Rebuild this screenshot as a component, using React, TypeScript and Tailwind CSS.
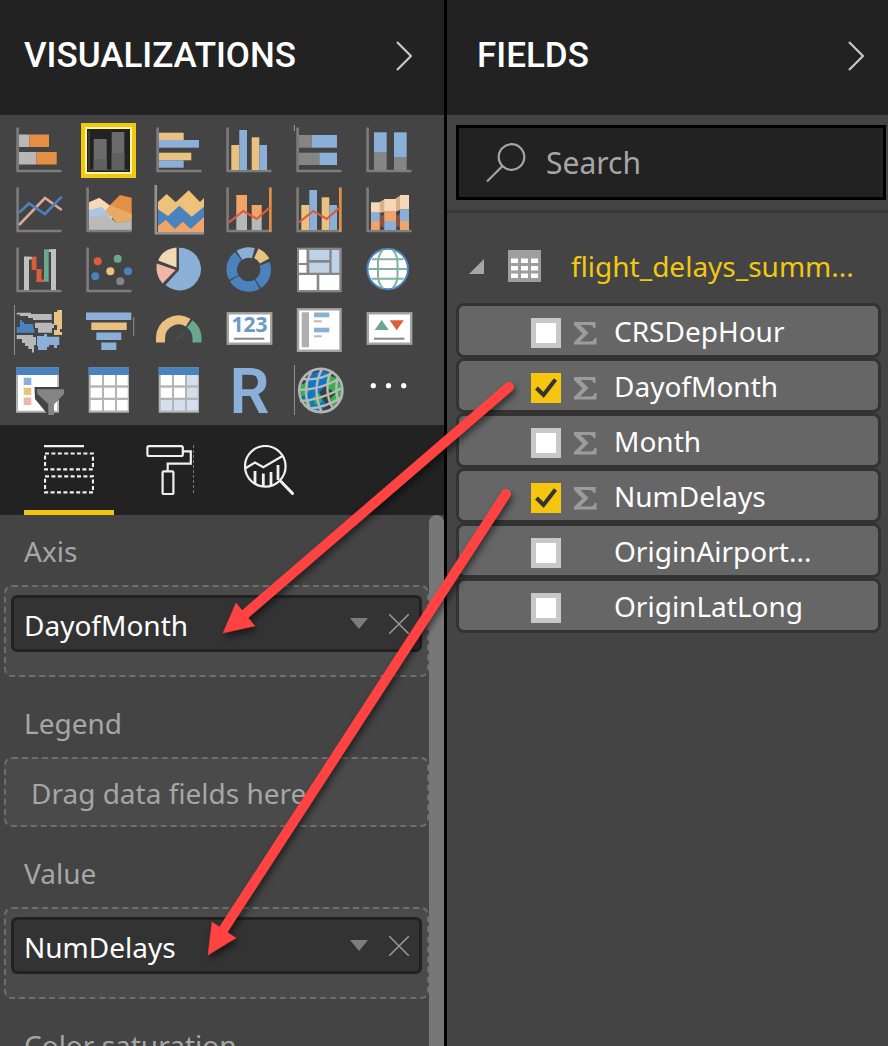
import { useState, type ReactNode } from "react";

const GRAY = "#7d7d7d";
const SILVER = "#b8b8b8";
const TAN = "#e9c282";
const SKY = "#8bafd6";
const BLUE = "#4a82bd";
const ORANGE = "#e58f45";
const SALMON = "#f0a468";
const RED = "#dc5c3c";
const GREEN = "#6aa791";
const PEACH = "#f6d7b8";
const PINK = "#efb5a8";

type Box = [number, number, number, number, string];

/** Filled boxes given as left, top, right, bottom, colour. */
function Boxes({ items }: { items: Box[] }) {
  return (
    <>
      {items.map(([l, t, r, b, fill], i) => (
        <rect key={i} x={l} y={t} width={r - l} height={b - t} fill={fill} />
      ))}
    </>
  );
}

function Axes() {
  return <path d="M6.6 4.5V48H50.5" fill="none" stroke={GRAY} strokeWidth="2.6" />;
}

function TableGlyph({ shaded }: { shaded?: boolean }) {
  const xs = [[9.7, 21], [23, 34], [36, 46.7]];
  const ys = [[12, 22.3], [24.7, 34.7], [37, 47.5]];
  return (
    <>
      <Boxes items={[[7.7, 4.3, 48, 49.7, "#b4b4b4"], [7.7, 4.3, 48, 12, BLUE]]} />
      {ys.map(([t, b], r) =>
        xs.map(([l, right], c) => (
          <rect
            key={`${r}-${c}`}
            x={l}
            y={t}
            width={right - l}
            height={b - t}
            fill={shaded && (r === 2 || c === 2) ? "#d3dfee" : "#fff"}
          />
        )),
      )}
    </>
  );
}

function Arc({ from, to, color, r = 17 }: { from: number; to: number; color: string; r?: number }) {
  const p = (a: number) => {
    const t = (a * Math.PI) / 180;
    return `${27.7 + r * Math.sin(t)} ${26.5 - r * Math.cos(t)}`;
  };
  return <path d={`M${p(from)}A${r} ${r} 0 0 1 ${p(to)}`} fill="none" stroke={color} strokeWidth="10.5" />;
}

const visuals: { name: string; art: ReactNode }[] = [
  {
    name: "Stacked bar chart",
    art: (
      <>
        <Axes />
        <Boxes items={[[8, 11.5, 18.3, 24, SILVER], [18.3, 11.5, 38, 24, ORANGE], [8, 29, 25.3, 41.5, SILVER], [25.3, 29, 45.7, 41.5, ORANGE]]} />
      </>
    ),
  },
  {
    name: "Stacked column chart",
    art: (
      <>
        <path d="M8 8V47H47" fill="none" stroke="#3d3d3d" strokeWidth="2" />
        <Boxes items={[[12.7, 16, 25.7, 47, "#6b6b6b"], [30.7, 9, 43.3, 47, "#6b6b6b"], [12.7, 36, 25.7, 47, "#606060"], [30.7, 30, 43.3, 47, "#606060"]]} />
      </>
    ),
  },
  {
    name: "Clustered bar chart",
    art: (
      <>
        <Axes />
        <Boxes items={[[8, 9.7, 32.7, 17, TAN], [8, 17, 48, 24.7, SKY], [8, 29.7, 40.3, 37.3, TAN], [8, 37.3, 32.7, 44.7, SKY]]} />
      </>
    ),
  },
  {
    name: "Clustered column chart",
    art: (
      <>
        <Axes />
        <Boxes items={[[10.3, 22, 18.3, 47, TAN], [18.3, 7, 26, 47, SKY], [30.7, 14.3, 38.3, 47, TAN], [38.3, 22, 46, 47, SKY]]} />
      </>
    ),
  },
  {
    name: "100% stacked bar chart",
    art: (
      <>
        <Axes />
        <path d="M3.3 2V8" stroke="#a0a0a0" strokeWidth="1" />
        <Boxes items={[[8, 12, 20.7, 24.7, "#858585"], [20.7, 12, 46, 24.7, SKY], [8, 29.7, 28.3, 42, "#858585"], [28.3, 29.7, 46, 42, SKY]]} />
      </>
    ),
  },
  {
    name: "100% stacked column chart",
    art: (
      <>
        <Axes />
        <Boxes items={[[13, 9.3, 25.7, 29.7, SKY], [13, 29.7, 25.7, 47, "#858585"], [33, 9.3, 45.7, 34.7, SKY], [33, 34.7, 45.7, 47, "#858585"]]} />
      </>
    ),
  },
  {
    name: "Line chart",
    art: (
      <>
        <Axes />
        <path d="M8 42L34 15L50.7 27" fill="none" stroke="#dba898" strokeWidth="2.6" />
        <path d="M8 29.7L18 20.5L34 31L50.7 13.7" fill="none" stroke={BLUE} strokeWidth="2.6" />
      </>
    ),
  },
  {
    name: "Area chart",
    art: (
      <>
        <path d="M8 19.3L18.3 14.7L31 24V48H8Z" fill={PEACH} />
        <path d="M8 27L20 24L31 32L22 36H8Z" fill="#a9c6e6" />
        <path d="M8 34L26 32L36 40L50.7 37V48H8Z" fill="#bababa" />
        <path d="M29 22L39 12L50.7 14.7V37L36 40L25 28Z" fill={ORANGE} />
        <path d="M25 28L29 22L50.7 31V37L36 40Z" fill="#e5ac68" />
        <Axes />
      </>
    ),
  },
  {
    name: "Stacked area chart",
    art: (
      <>
        <path d="M7 19L15.7 11L24.7 19.3L37.7 7.3L49 19L53 15V50H7Z" fill="#efc27c" />
        <path d="M7 26.3L17 33L28.3 22.7L40.7 33.7L53 23.7V50H7Z" fill={BLUE} />
        <path d="M7 43L14.7 37L24 46L31.7 38.7L39.7 46L53 34V50H7Z" fill={SALMON} />
        <path d="M4.8 2V50.2H53" fill="none" stroke="#949494" strokeWidth="2.6" />
      </>
    ),
  },
  {
    name: "Line and stacked column chart",
    art: (
      <>
        <Axes />
        <Boxes items={[[15.3, 12, 26, 30, SALMON], [15.3, 30, 26, 47, SILVER], [30.7, 22, 40.7, 35, SALMON], [30.7, 35, 40.7, 47, SILVER], [48, 4.5, 50.7, 49, ORANGE]]} />
        <path d="M8 39.3L22.3 28L35.7 36L49 24.3" fill="none" stroke={RED} strokeWidth="2.2" />
      </>
    ),
  },
  {
    name: "Line and clustered column chart",
    art: (
      <>
        <Axes />
        <Boxes items={[[10.3, 22, 18.3, 47, TAN], [18.3, 7, 26, 47, SKY], [30.7, 14.3, 38.3, 47, TAN], [38.3, 22, 46, 47, SKY], [48, 4.5, 50.7, 49, ORANGE]]} />
        <path d="M8 39.3L22.3 28L35.7 36L49 24.3" fill="none" stroke={RED} strokeWidth="2.2" />
      </>
    ),
  },
  {
    name: "Ribbon chart",
    art: (
      <>
        <Axes />
        <path d="M18 19.3L24 16V29L18 30ZM34 16L40 12V26.5L34 29Z" fill="#d9b08c" />
        <path d="M18 29L24 37V47L18 38ZM34 37L40 29V38L34 47Z" fill="#6d6470" />
        <path d="M18 38L24 29V38L18 47ZM34 29L40 38V47L34 38Z" fill="#96503a" />
        <Boxes
          items={[
            [10, 19.3, 18.7, 29.7, PEACH], [10, 29.7, 18.7, 38, SKY], [10, 38, 18.7, 47, SALMON],
            [23.3, 16, 35, 28.7, PEACH], [23.3, 28.7, 35, 38, SALMON], [23.3, 38, 35, 47, SKY],
            [39, 12, 48, 26.3, PEACH], [39, 26.3, 48, 38, SKY], [39, 38, 48, 47, SALMON],
          ]}
        />
      </>
    ),
  },
  {
    name: "Waterfall chart",
    art: (
      <>
        <Axes />
        <Boxes
          items={[
            [13, 13.7, 18, 47, "#c0c0c0"], [13, 13.7, 21, 16.5, "#c0c0c0"], [20.7, 13.7, 25.5, 27, RED],
            [25.5, 26, 30.5, 39, RED], [25.5, 36.5, 33, 39, RED], [33, 6.3, 37.7, 38.7, GREEN],
            [37.7, 6.3, 45, 9, "#c0c0c0"], [40, 6.3, 45, 47, "#c0c0c0"],
          ]}
        />
      </>
    ),
  },
  {
    name: "Scatter chart",
    art: (
      <>
        <Axes />
        <circle cx="16.7" cy="18.3" r="4" fill={RED} />
        <circle cx="36.7" cy="15.7" r="4" fill={GREEN} />
        <circle cx="29.3" cy="28.3" r="4" fill={TAN} />
        <circle cx="47" cy="28.3" r="4" fill={BLUE} />
        <circle cx="14.3" cy="33.3" r="4" fill={BLUE} />
        <circle cx="39.3" cy="38.3" r="4" fill="#858585" />
      </>
    ),
  },
  {
    name: "Pie chart",
    art: (
      <>
        <path d="M28 4.8A21.3 21.3 0 1 1 14.5 42L28 27Z" fill={SKY} />
        <path d="M25.5 4.5V24.5L7.2 17.5Q11.5 6 25.5 4.5Z" fill="#f0dab4" />
        <path d="M5.8 20.5L24.6 27L11.5 40.5Q4 32 5.8 20.5Z" fill={PINK} />
      </>
    ),
  },
  {
    name: "Donut chart",
    art: (
      <>
        <Arc from={-33} to={16} color={SKY} />
        <Arc from={25} to={62} color={TAN} r={18} />
        <Arc from={70} to={146} color={BLUE} />
        <Arc from={150} to={238} color={BLUE} />
        <Arc from={242} to={322} color={BLUE} />
      </>
    ),
  },
  {
    name: "Treemap",
    art: (
      <Boxes
        items={[
          [6, 4.7, 50.7, 49.3, "#878787"], [8, 6.7, 15.5, 20, "#fff"], [8, 22, 15.5, 29.7, "#fff"],
          [18.3, 7, 38.3, 17, "#bfd2e8"], [18.3, 19.7, 38.3, 29.7, "#bfd2e8"], [40.7, 7, 48.3, 29.7, "#bfd2e8"],
          [8, 32, 25.7, 47, "#fff"], [28.3, 32, 48.3, 47, "#fff"],
        ]}
      />
    ),
  },
  {
    name: "Map",
    art: (
      <>
        <circle cx="26.7" cy="26" r="20.3" fill="#fff" stroke={BLUE} strokeWidth="2" />
        <path
          d="M7 26H46.5M11 16.3H42.5M11 35.7H42.5M22 6.5Q17 12 17 19V33Q17 40 22 45.5M31.5 6.5Q36.5 12 36.5 19V33Q36.5 40 31.5 45.5"
          fill="none"
          stroke="#7fb39f"
          strokeWidth="2"
        />
      </>
    ),
  },
  {
    name: "Filled map",
    art: (
      <>
        <path d="M3.5 2V52" stroke="#87918f" strokeWidth="1" />
        <path d="M5.7 9.7H20V11H40.7V17H22V15H17V13H9V11.5H5.7Z" fill={SILVER} />
        <path d="M9 17H11V19H13V21H22.3V26H23.3V29.7H5.7V24H9Z" fill={BLUE} />
        <path d="M24 19.7H41V21H43V25H41V29.7H27V25H24Z" fill={SILVER} />
        <path d="M46.3 7H51V26H49V29H51V32H43V27H46V22H43V9H46.3Z" fill={TAN} />
        <path d="M5.7 32H22V34H25V42H23V49.5H21V46H17.3V43H14V40H11V36H5.7Z" fill={SILVER} />
        <path d="M26 33H33V31H36V33.7H48.3V42H46V45H43V42H38V44H36V47H27V43H26Z" fill={SKY} />
      </>
    ),
  },
  {
    name: "Funnel",
    art: (
      <>
        <Boxes items={[[5, 9.5, 50.3, 17, SKY], [10.3, 19.5, 45.7, 27, TAN], [15.3, 29.5, 40.3, 37, SKY], [20.3, 39.5, 35.3, 47, SKY]]} />
        <path d="M52.7 14V33" stroke="#87918f" strokeWidth="1" />
      </>
    ),
  },
  {
    name: "Gauge",
    art: (
      <>
        <path d="M9.5 39.5V35A18.2 18.2 0 0 1 37.2 19.6" fill="none" stroke={TAN} strokeWidth="9" />
        <path d="M38.7 20.8A18.2 18.2 0 0 1 46 35V39.5" fill="none" stroke={GREEN} strokeWidth="9" />
        <path d="M24 37L33 31" stroke="#4c4c4c" strokeWidth="3" />
      </>
    ),
  },
  {
    name: "Card",
    art: (
      <>
        <rect x="6.8" y="10.3" width="43.4" height="30.4" fill="#fff" stroke="#a3a3a3" strokeWidth="2.4" />
        <text x="28.5" y="29" textAnchor="middle" className="fill-[#6b9ac6] font-['Noto_Sans',sans-serif] text-[21px] font-bold">
          123
        </text>
        <path d="M13 35.7H43.3" stroke="#858585" strokeWidth="2" />
      </>
    ),
  },
  {
    name: "Multi-row card",
    art: (
      <>
        <rect x="7" y="6.3" width="42.5" height="41.5" fill="#fff" stroke="#a3a3a3" strokeWidth="2.4" />
        <Boxes
          items={[
            [10.7, 9.3, 18, 44.3, "#b0b0b0"], [23, 9.5, 38.3, 14.3, SKY], [23, 17.3, 30.7, 19.3, "#b8b8b8"],
            [23, 24.7, 38.3, 29.3, SKY], [23, 32.3, 30.7, 34.3, "#b8b8b8"],
          ]}
        />
      </>
    ),
  },
  {
    name: "KPI",
    art: (
      <>
        <rect x="6.8" y="10.3" width="43.4" height="30.4" fill="#fff" stroke="#a3a3a3" strokeWidth="2.4" />
        <path d="M13.7 27L20.7 17L27.7 27Z" fill={GREEN} />
        <path d="M28.7 17.3H42.7L35.7 27.3Z" fill={RED} />
        <path d="M13 35.7H43.3" stroke="#858585" strokeWidth="2" />
      </>
    ),
  },
  {
    name: "Slicer",
    art: (
      <>
        <Boxes
          items={[
            [5, 4.3, 48, 49.7, "#b4b4b4"], [7, 12, 46.3, 47.7, "#fff"], [5, 4.3, 48, 12, BLUE],
            [12.7, 14.7, 20.3, 22, SKY], [12.7, 24.7, 20.3, 32, TAN], [12.7, 34.5, 20.3, 42, PINK],
          ]}
        />
        <path d="M23.5 24H53V31L42 42V52H35.5V50L24 36Z" fill="#444" />
        <path d="M25.7 26.3H53V31L43 41V52H37.3V41L26.5 31Z" fill="#858585" />
      </>
    ),
  },
  { name: "Table", art: <TableGlyph /> },
  { name: "Matrix", art: <TableGlyph shaded /> },
  {
    name: "R script visual",
    art: (
      <text x="28.5" y="49.7" textAnchor="middle" className="fill-[#8bafd6] font-[Roboto,sans-serif] text-[63px] font-semibold">
        R
      </text>
    ),
  },
  {
    name: "ArcGIS map",
    art: (
      <>
        <path d="M3.5 2V52" stroke="#87918f" strokeWidth="1" />
        <circle cx="29.8" cy="27.5" r="22" fill="#3a3f3d" />
        <path d="M18 12L30 7L39 10L37 20L28 30L36 43L27 49L16 44L9 29Z" fill="#0f77c4" />
        <path d="M36 12L46 15L51 26V36L43 45L39 36L45 30L35 24ZM9 22L17 19L18 29L10 34ZM22 34L29 30L31 39L24 42ZM14 38L19 37L20 43L16 44Z" fill="#36b24c" />
        <path
          d="M12 16Q28 18 43 9M8 27Q28 27 48 16M9 38Q30 37 51 25M17 46Q36 44 51 34M21 8Q10 24 19 47M31 6Q20 26 31 50M40 8Q32 28 42 46M47 14Q43 27 48 40"
          fill="none"
          stroke="#b9b9b9"
          strokeWidth="2.4"
        />
        <circle cx="29.8" cy="27.5" r="21.6" fill="none" stroke="#b4b4b4" strokeWidth="2.6" />
      </>
    ),
  },
  {
    name: "More visuals",
    art: (
      <>
        <circle cx="12.3" cy="22.7" r="2.6" fill="#fff" />
        <circle cx="27.5" cy="22.7" r="2.6" fill="#fff" />
        <circle cx="42.7" cy="22.7" r="2.6" fill="#fff" />
      </>
    ),
  },
];

const tabs: { name: string; art: ReactNode }[] = [
  {
    name: "Fields",
    art: (
      <>
        <path d="M0 1H40" strokeWidth="2.6" />
        <path d="M1 8.5H49V24.3H1ZM1 31.3H49V47.3H1Z" strokeDasharray="4 2.4" />
      </>
    ),
  },
  {
    name: "Format",
    art: (
      <>
        <rect x="3.4" y="1.2" width="35.4" height="9.8" rx="1.5" />
        <path d="M39 6.3H46.8V18.7H23.7V26" />
        <rect x="18.6" y="26.4" width="10.8" height="22.6" rx="1" />
        <path d="M49.6 0V50" stroke="#999" strokeWidth="0.8" strokeDasharray="3 2" />
      </>
    ),
  },
  {
    name: "Analytics",
    art: (
      <>
        <circle cx="21.3" cy="21.3" r="20.3" />
        <path d="M1.5 23.3L11 17.5L19.3 22.3L38.5 11" />
        <path d="M11 26V39M19.3 28.5V41.5M27 27V41M34 20V35" strokeWidth="2.8" />
        <path d="M36 35.5L49.5 49.5" strokeWidth="3" />
      </>
    ),
  },
];

function Chevron() {
  return (
    <svg viewBox="0 0 16 30" className="h-[30px] w-4" fill="none" stroke="#c8c8c8" strokeWidth="2.2" aria-hidden="true">
      <path d="M1 1L15 15L1 29" />
    </svg>
  );
}

function PaneHeader({ title, className }: { title: string; className: string }) {
  return (
    <header className={`flex h-[115px] shrink-0 items-center justify-between bg-[#222] pb-1 ${className}`}>
      <h2 className="font-[Roboto,sans-serif] text-[35px] leading-10 font-medium text-white">{title}</h2>
      <button type="button" aria-label={`Collapse ${title}`}>
        <Chevron />
      </button>
    </header>
  );
}

function FieldWell({ label, field }: { label: string; field?: string }) {
  return (
    <section className="mb-[10px] pl-1">
      <h3 className="flex h-[70px] items-center pt-[2px] pl-5 text-[#a6a6a6]">{label}</h3>
      <div
        className={`rounded-lg border-2 border-dashed border-[#6e6e6e] bg-[#4a4a4a] ${field ? "h-[92px] px-[5px] pt-2" : "flex h-[70px] items-center pt-[2px] pl-[25px]"}`}
      >
        {field ? (
          <div className="flex h-[57px] items-center rounded-md border-3 border-[#222] bg-[#333] pr-[10px] pl-[10px] text-white">
            <span className="flex-1 pt-[2px]">{field}</span>
            <button type="button" aria-label={`${field} options`} className="mr-[21px]">
              <svg viewBox="0 0 18 11" className="h-[11px] w-[18px]" aria-hidden="true">
                <path d="M0 0H18L9 11Z" fill="#7d7d7d" />
              </svg>
            </button>
            <button type="button" aria-label={`Remove ${field}`}>
              <svg viewBox="0 0 20 20" className="size-5" fill="none" stroke="#999" strokeWidth="1.5" aria-hidden="true">
                <path d="M0 0L20 20M20 0L0 20" />
              </svg>
            </button>
          </div>
        ) : (
          <span className="text-[#a6a6a6]">Drag data fields here</span>
        )}
      </div>
    </section>
  );
}

function FieldRow({ name, numeric, initial }: { name: string; numeric: boolean; initial: boolean }) {
  const [checked, setChecked] = useState(initial);
  return (
    <li className="rounded-lg border-3 border-[#333] bg-[#666]">
      <label className="flex h-[49px] items-center pl-[72px]">
        <span className="mt-1 grid size-[30px] shrink-0">
          <input
            type="checkbox"
            checked={checked}
            onChange={(e) => setChecked(e.target.checked)}
            className="col-start-1 row-start-1 size-[30px] appearance-none border-5 border-[#c8c8c8] bg-white checked:border-[#f6c50f] checked:bg-[#f6c50f]"
          />
          {checked && (
            <svg viewBox="0 0 30 30" className="pointer-events-none col-start-1 row-start-1" fill="none" stroke="#333" strokeWidth="4" aria-hidden="true">
              <path d="M5.5 15L12.5 22L24.5 6.5" />
            </svg>
          )}
        </span>
        <span className="mt-1 ml-3 w-[41px] shrink-0">
          {numeric && (
            <svg viewBox="0 0 24 24" className="size-6" aria-hidden="true">
              <path d="M1 1H22.5V7H20.5Q20 4 16 4H7.5L15.5 12L7 20.5H17Q21 20.5 21.5 17H23.5V23.5H1V21L9.5 12.5L1 4Z" fill="#9c9c9c" />
            </svg>
          )}
        </span>
        <span className="truncate text-white">{name}</span>
      </label>
    </li>
  );
}

const fields = [
  { name: "CRSDepHour", numeric: true, initial: false },
  { name: "DayofMonth", numeric: true, initial: true },
  { name: "Month", numeric: true, initial: false },
  { name: "NumDelays", numeric: true, initial: true },
  { name: "OriginAirport...", numeric: false, initial: false },
  { name: "OriginLatLong", numeric: false, initial: false },
];

export default function App() {
  const [visual, setVisual] = useState(1);
  const [tab, setTab] = useState(0);

  return (
    <main className="relative grid h-screen grid-cols-2 overflow-hidden bg-[#444] font-['Noto_Sans',sans-serif] text-[28px] leading-9">
      <section className="flex min-h-0 flex-col">
        <PaneHeader title="VISUALIZATIONS" className="pr-8 pl-6" />
        <div className="grid shrink-0 grid-cols-[repeat(6,55px)] gap-x-[15px] gap-y-[5px] pt-2 pb-[7px] pl-[11px]">
          {visuals.map((v, i) => (
            <button
              key={v.name}
              type="button"
              aria-label={v.name}
              aria-pressed={visual === i}
              onClick={() => setVisual(i)}
              className={`grid size-[55px] ${visual === i ? "bg-[#222] outline-4 -outline-offset-4 outline-[#f2c811] inset-ring-[6px] inset-ring-[#fff6a6]" : ""}`}
            >
              <svg viewBox="0 0 55 55" className="size-[55px] overflow-visible" aria-hidden="true">
                {v.art}
              </svg>
            </button>
          ))}
        </div>
        <nav className="flex h-[90px] shrink-0 gap-[10px] bg-[#222] pl-6">
          {tabs.map((t, i) => (
            <button
              key={t.name}
              type="button"
              aria-label={t.name}
              onClick={() => setTab(i)}
              className={`flex w-[90px] justify-center border-b-5 pt-5 ${tab === i ? "border-[#f6c50f]" : "border-transparent"}`}
            >
              <svg viewBox="0 0 50 50" className="size-[50px]" fill="none" stroke="#f0f0f0" strokeWidth="2.2" aria-hidden="true">
                {t.art}
              </svg>
            </button>
          ))}
        </nav>
        <div className="flex min-h-0 flex-1">
          <div className="min-w-0 flex-1 overflow-hidden">
            <FieldWell label="Axis" field="DayofMonth" />
            <FieldWell label="Legend" />
            <FieldWell label="Value" field="NumDelays" />
            <FieldWell label="Color saturation" />
          </div>
          <div className="w-[15px] shrink-0 rounded-t-lg bg-[#777]" />
        </div>
      </section>

      <section className="flex min-h-0 flex-col border-l-3 border-black">
        <PaneHeader title="FIELDS" className="pr-6 pl-[30px]" />
        <div className="border-b-3 border-[#383838] pt-[10px] pr-[2px] pb-[10px] pl-[9px]">
          <label className="flex h-[75px] items-center border-3 border-black bg-[#222] pl-[27px]">
            <svg viewBox="0 0 40 40" className="size-10 shrink-0" fill="none" stroke="#a6a6a6" strokeWidth="2.2" aria-hidden="true">
              <circle cx="25.5" cy="14" r="12.8" />
              <path d="M16.5 23L1 38.5" />
            </svg>
            <input
              type="text"
              aria-label="Search"
              placeholder="Search"
              className="ml-5 min-w-0 flex-1 bg-transparent text-[30px] leading-10 text-white outline-none placeholder:text-[#a6a6a6]"
            />
          </label>
        </div>
        <button type="button" className="flex h-[90px] shrink-0 items-center pt-4 pr-8 pl-[22px] text-left">
          <svg viewBox="0 0 15 15" className="size-[15px] shrink-0" aria-hidden="true">
            <path d="M15 0V15H0Z" fill="#a6a6a6" />
          </svg>
          <svg viewBox="0 0 33 32" className="ml-6 h-8 w-[33px] shrink-0" aria-hidden="true">
            <rect width="33" height="32" fill="#9e9e9e" />
            <path
              d="M3 8.5h7v4.5h-7zM13 8.5h7v4.5h-7zM23 8.5h7v4.5h-7zM3 16h7v4.5h-7zM13 16h7v4.5h-7zM23 16h7v4.5h-7zM3 23.500h7v4.500h-7zM13 23.500h7v4.500h-7zM23 23.500h7v4.500h-7z"
              fill="#fff"
            />
          </svg>
          <span className="ml-[30px] truncate text-[#f2c811]">flight_delays_summ...</span>
        </button>
        <ul className="pr-[7px] pl-[9px]">
          {fields.map((f) => (
            <FieldRow key={f.name} {...f} />
          ))}
        </ul>
      </section>

      <svg
        viewBox="0 0 888 1046"
        className="pointer-events-none absolute top-0 left-0 h-[1046px] w-[888px] drop-shadow-[2px_4px_3px_rgba(0,0,0,0.5)]"
        fill="#ff4343"
        stroke="#ff4343"
        aria-hidden="true"
      >
        <path d="M509 387L243 616M506 494L220 935" fill="none" strokeWidth="10" strokeLinecap="round" />
        <path d="M223 633L236 603L255 626ZM208 955L212 922L236 938Z" strokeWidth="0.5" />
      </svg>
    </main>
  );
}
